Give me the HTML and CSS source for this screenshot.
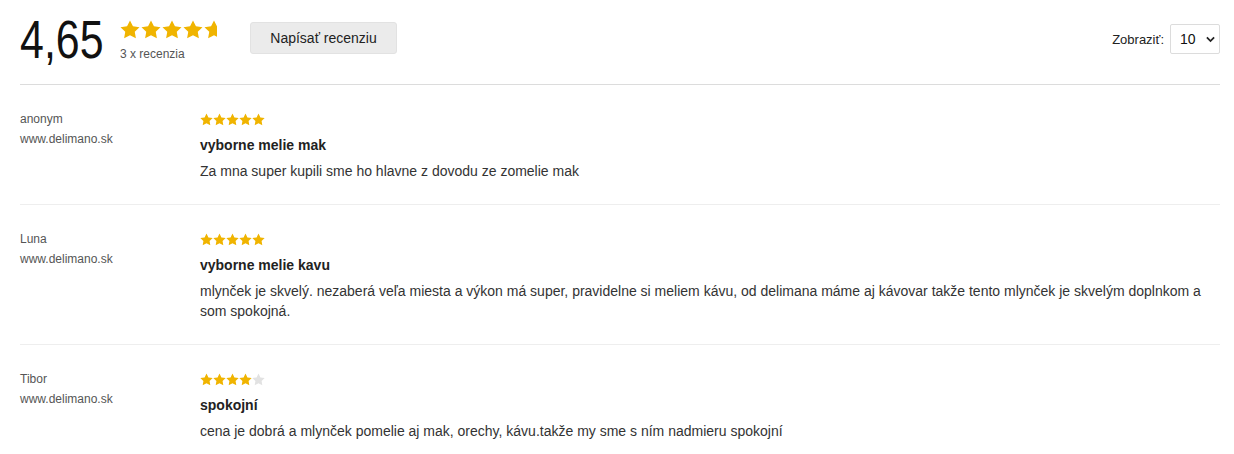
FILE: index.html
```html
<!DOCTYPE html>
<html lang="sk">
<head>
<meta charset="utf-8">
<title>Recenzie</title>
<link rel="stylesheet" href="styles.css">
</head>
<body>
<svg width="0" height="0" class="defs" aria-hidden="true">
  <defs>
    <symbol id="star" viewBox="0 0 24 23">
      <polygon points="12,0.5 15.53,7.65 23.41,8.79 17.71,14.35 19.05,22.21 12,18.5 4.95,22.21 6.29,14.35 0.59,8.79 8.47,7.65"/>
    </symbol>
    <clipPath id="half"><rect x="0" y="0" width="15.5" height="23"/></clipPath>
  </defs>
</svg>
<div class="page">
  <header class="summary">
    <div class="score"><span class="score-num">4,65</span></div>
    <div class="rating">
      <div class="big-stars">
        <svg class="bstar" viewBox="0 0 24 23" preserveAspectRatio="none"><use href="#star"/></svg>
        <svg class="bstar" viewBox="0 0 24 23" preserveAspectRatio="none"><use href="#star"/></svg>
        <svg class="bstar" viewBox="0 0 24 23" preserveAspectRatio="none"><use href="#star"/></svg>
        <svg class="bstar" viewBox="0 0 24 23" preserveAspectRatio="none"><use href="#star"/></svg>
        <svg class="bstar" viewBox="0 0 24 23" preserveAspectRatio="none"><g clip-path="url(#half)"><use href="#star"/></g></svg>
      </div>
      <div class="count">3 x recenzia</div>
    </div>
    <div class="write-btn">Napísať recenziu</div>
    <div class="spacer"></div>
    <div class="show">
      <span class="show-label">Zobraziť:</span>
      <div class="select">
        <span>10</span>
        <svg class="chev" viewBox="0 0 10 7" width="9" height="7"><path d="M1 1.2 L5 5.2 L9 1.2" fill="none" stroke="#222" stroke-width="2"/></svg>
      </div>
    </div>
  </header>

  <div class="review">
    <div class="author">
      <div>anonym</div>
      <div>www.delimano.sk</div>
    </div>
    <div class="body">
      <div class="stars">
        <svg class="sstar" viewBox="0 0 24 23"><use href="#star"/></svg><svg class="sstar" viewBox="0 0 24 23"><use href="#star"/></svg><svg class="sstar" viewBox="0 0 24 23"><use href="#star"/></svg><svg class="sstar" viewBox="0 0 24 23"><use href="#star"/></svg><svg class="sstar" viewBox="0 0 24 23"><use href="#star"/></svg>
      </div>
      <div class="title">vyborne melie mak</div>
      <div class="text">Za mna super kupili sme ho hlavne z dovodu ze zomelie mak</div>
    </div>
  </div>

  <div class="review">
    <div class="author">
      <div>Luna</div>
      <div>www.delimano.sk</div>
    </div>
    <div class="body">
      <div class="stars">
        <svg class="sstar" viewBox="0 0 24 23"><use href="#star"/></svg><svg class="sstar" viewBox="0 0 24 23"><use href="#star"/></svg><svg class="sstar" viewBox="0 0 24 23"><use href="#star"/></svg><svg class="sstar" viewBox="0 0 24 23"><use href="#star"/></svg><svg class="sstar" viewBox="0 0 24 23"><use href="#star"/></svg>
      </div>
      <div class="title">vyborne melie kavu</div>
      <div class="text">mlynček je skvelý. nezaberá veľa miesta a výkon má super, pravidelne si meliem kávu, od delimana máme aj kávovar takže tento mlynček je skvelým doplnkom a som spokojná.</div>
    </div>
  </div>

  <div class="review last">
    <div class="author">
      <div>Tibor</div>
      <div>www.delimano.sk</div>
    </div>
    <div class="body">
      <div class="stars">
        <svg class="sstar" viewBox="0 0 24 23"><use href="#star"/></svg><svg class="sstar" viewBox="0 0 24 23"><use href="#star"/></svg><svg class="sstar" viewBox="0 0 24 23"><use href="#star"/></svg><svg class="sstar" viewBox="0 0 24 23"><use href="#star"/></svg><svg class="sstar empty" viewBox="0 0 24 23"><use href="#star"/></svg>
      </div>
      <div class="title">spokojní</div>
      <div class="text">cena je dobrá a mlynček pomelie aj mak, orechy, kávu.takže my sme s ním nadmieru spokojní</div>
    </div>
  </div>
</div>
</body>
</html>
```
FILE: styles.css
```css
* { box-sizing: border-box; }
html, body { margin: 0; padding: 0; background: #fff; }
body {
  font-family: "Liberation Sans", Arial, sans-serif;
  color: #333;
  font-size: 14px;
}
.defs { position: absolute; width: 0; height: 0; overflow: hidden; }
.page { margin: 0 14px 0 20px; }

.summary {
  display: flex;
  align-items: flex-start;
  height: 85px;
  padding-top: 13px;
  border-bottom: 1px solid #dcdcdc;
}
.score {
  width: 84px;
  font-family: "Liberation Sans", Arial, sans-serif;
  font-size: 53px;
  line-height: 53px;
  color: #111;
  white-space: nowrap;
}
.score-num {
  display: inline-block;
  transform: scaleX(0.81);
  transform-origin: 0 50%;
}
.rating { margin-left: 16px; margin-top: 7px; }
.big-stars { display: flex; gap: 1px; height: 19px; }
.bstar { width: 20px; height: 19px; fill: #f0b400; display: block; }
.count {
  font-size: 12px;
  line-height: 16px;
  color: #555;
  margin-top: 7px;
}
.write-btn {
  margin-left: 26px;
  margin-top: 9px;
  width: 147px;
  height: 32px;
  line-height: 30px;
  text-align: center;
  background: #ebebeb;
  border: 1px solid #e2e2e2;
  border-radius: 3px;
  color: #222;
  font-size: 14px;
}
.spacer { flex: 1; }
.show {
  display: flex;
  align-items: center;
  margin-top: 11px;
}
.show-label { font-size: 13px; color: #222; margin-right: 6px; }
.select {
  width: 50px;
  height: 30px;
  border: 1px solid #dcdcdc;
  border-radius: 2px;
  display: flex;
  align-items: center;
  padding-left: 9px;
  gap: 10px;
  color: #111;
  font-size: 14px;
}
.chev { display: block; }

.review {
  display: grid;
  grid-template-columns: 180px 1fr;
  padding: 24px 0 23px;
  border-bottom: 1px solid #eeeeee;
}
.review.last { border-bottom: none; }
.author {
  font-size: 12px;
  line-height: 20px;
  color: #555;
}
.stars {
  height: 20px;
  display: flex;
  align-items: center;
  gap: 0;
}
.sstar { width: 13px; height: 13px; fill: #f0b400; display: block; }
.sstar.empty { fill: #e2e2e2; }
.title {
  margin-top: 6px;
  font-weight: bold;
  font-size: 14px;
  line-height: 20px;
  color: #222;
}
.text {
  margin-top: 6px;
  font-size: 14px;
  line-height: 20px;
  color: #333;
}
```
